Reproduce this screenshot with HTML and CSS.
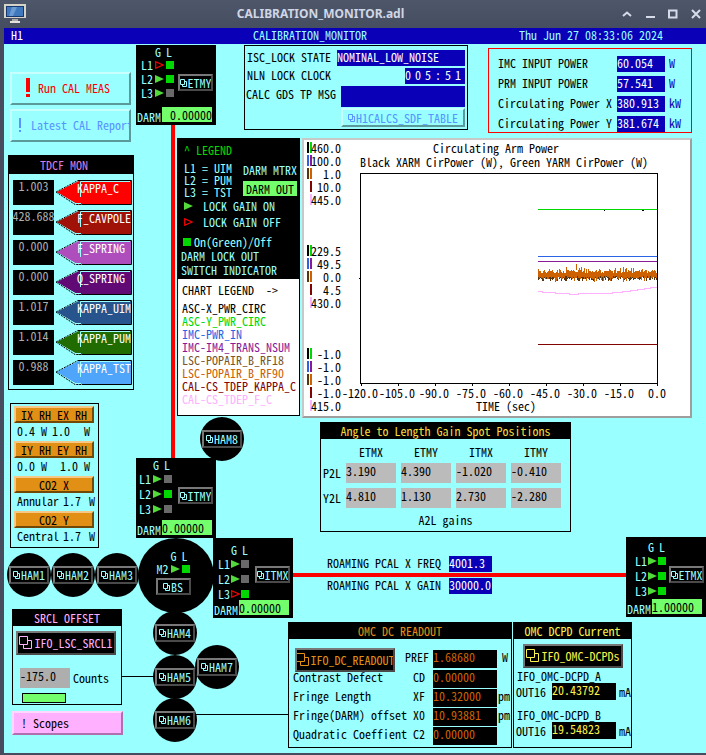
FILE: index.html
```html
<!DOCTYPE html>
<html lang="en">
<head>
<meta charset="utf-8">
<title>CALIBRATION_MONITOR.adl</title>
<link rel="stylesheet" href="styles.css">
</head>
<body>
<svg class="defs" aria-hidden="true">
  <symbol id="rd" viewBox="0 0 8 8"><path d="M.5 .5h4v5h-4z M4.500 2.500h2v5h-4v-2" fill="none" stroke="currentColor"/></symbol>
  <symbol id="rd-big" viewBox="0 0 14 14"><path d="M.5 .5h8v8h-8z M8.500 4.500h4v8h-8v-4" fill="none" stroke="currentColor"/></symbol>
  <symbol id="on" viewBox="0 0 9 8"><path d="M0 0L9 4L0 8z" fill="#52da3b"/></symbol>
  <symbol id="off" viewBox="0 0 9 8"><path d="M.7 .8L8 4L.7 7.200z" fill="none" stroke="#fd0000" stroke-width="1.200"/></symbol>
  <symbol id="tag" viewBox="0 0 76 26">
    <path d="M0 12L23 1H75V25H23z" fill="currentColor"/>
    <path d="M0 12L22 .5H75" fill="none" stroke="#99ffff"/>
    <path d="M0 12L22 .5" fill="none" stroke="#000" stroke-dasharray="2 1"/>
    <path d="M0 12L19 23.500H25" fill="none" stroke="#99ffff"/>
    <path d="M0 12L19 24.500H25" fill="none" stroke="#000" stroke-dasharray="2 1"/>
    <path d="M22 .5H75.500V24.500H26" fill="none" stroke="#000"/>
    <path d="M24.500 17V1.500H74" fill="none" stroke="#99ffff"/>
  </symbol>
</svg>

<header class="titlebar">
  <svg class="app-icon" width="22" height="20" viewBox="0 0 22 20">
    <rect x="0" y="0" width="22" height="14" fill="#d5d2c8"/><rect x="2" y="2" width="18" height="11" fill="#15386f"/>
    <rect x="3" y="3" width="16" height="9" fill="#3f78bd"/><path d="M8 3h5l-4 9H5z" fill="#6b9bd3"/>
    <rect x="8" y="15" width="6" height="2" fill="#aaa"/><rect x="6" y="17" width="10" height="2" fill="#e4e2dc"/>
  </svg>
  <h1>CALIBRATION_MONITOR.adl</h1>
  <div class="window-buttons">
    <button aria-label="Shade"><svg width="10" height="10" viewBox="0 0 10 10"><path d="M1 7L5 3.500L9 7"/></svg></button>
    <button aria-label="Minimize"><svg width="10" height="10" viewBox="0 0 10 10"><path d="M1 8H10"/></svg></button>
    <button aria-label="Maximize"><svg width="10" height="10" viewBox="0 0 10 10"><path d="M1 1.500H8.500V8.500H1z"/></svg></button>
    <button aria-label="Close"><svg width="10" height="10" viewBox="0 0 10 10"><path d="M1 1L9 9M9 1L1 9"/></svg></button>
  </div>
</header>

<main class="screen">
  <div class="banner"><span class="ifo">H1</span><span>CALIBRATION_MONITOR</span><time>Thu Jun 27 08:33:06 2024</time></div>

  <div class="panels">
    <div class="side">
      <button class="bevel command run"><svg width="4" height="20" viewBox="0 0 4 20"><path d="M0 0h4v14H0zM0 16h4v3H0z" fill="currentColor"/></svg><span>Run CAL MEAS</span></button>
      <button class="bevel command report"><svg width="2" height="14" viewBox="0 0 2 14"><path d="M0 0h2v10H0zM0 12h2v2H0z" fill="currentColor"/></svg><span>Latest CAL Report</span></button>

      <section class="panel tdcf">
        <h2 class="violet">TDCF MON</h2>
        <ul>
          <li><output>1.003</output><button class="tag c1"><svg><use href="#tag"/></svg><span>KAPPA_C</span></button></li>
          <li><output>428.688</output><button class="tag c2"><svg><use href="#tag"/></svg><span>F_CAVPOLE</span></button></li>
          <li><output>0.000</output><button class="tag c3"><svg><use href="#tag"/></svg><span>F_SPRING</span></button></li>
          <li><output>0.000</output><button class="tag c4"><svg><use href="#tag"/></svg><span>Q_SPRING</span></button></li>
          <li><output>1.017</output><button class="tag c5"><svg><use href="#tag"/></svg><span>KAPPA_UIM</span></button></li>
          <li><output>1.014</output><button class="tag c6"><svg><use href="#tag"/></svg><span>KAPPA_PUM</span></button></li>
          <li><output>0.988</output><button class="tag c7"><svg><use href="#tag"/></svg><span>KAPPA_TST</span></button></li>
        </ul>
      </section>

      <section class="panel heaters">
        <button class="bevel orange">IX RH EX RH</button>
        <p class="pair"><span>0.4</span><span>W</span><span>1.0</span><span>W</span></p>
        <button class="bevel orange">IY RH EY RH</button>
        <p class="pair late"><span>0.0</span><span>W</span><span>1.0</span><span>W</span></p>
        <button class="bevel orange">CO2 X</button>
        <p class="single"><span>Annular</span><span>1.7</span><span>W</span></p>
        <button class="bevel orange">CO2 Y</button>
        <p class="single"><span>Central</span><span>1.7</span><span>W</span></p>
      </section>

      <section class="panel srcl">
        <h2 class="pink-text">SRCL OFFSET</h2>
        <button class="bevel dark wide pink-text"><svg class="big"><use href="#rd-big"/></svg>IFO_LSC_SRCL1</button>
        <label class="counts"><input value="-175.0"><span>Counts</span></label>
        <div class="bar"></div>
      </section>
      <button class="bevel scopes">! Scopes</button>
    </div>

    <div class="main">
      <div class="row top">
        <section class="panel lock">
          <p><span>ISC_LOCK STATE</span><output class="blue state">NOMINAL_LOW_NOISE</output></p>
          <p><span>NLN LOCK CLOCK</span><output class="blue clock"><span>0</span><span>0</span><span>5</span><span>:</span><span>5</span><span>1</span></output></p>
          <p class="msg"><span>CALC GDS TP MSG</span><output class="blue message"></output></p>
          <button class="bevel sdf"><svg class="small"><use href="#rd"/></svg>H1CALCS_SDF_TABLE</button>
        </section>
        <section class="panel power">
          <p><span>IMC INPUT POWER</span><output class="blue">60.054</output><span class="unit">W</span></p>
          <p><span>PRM INPUT POWER</span><output class="blue">57.541</output><span class="unit">W</span></p>
          <p><span>Circulating Power X</span><output class="blue">380.913</output><span class="unit">kW</span></p>
          <p><span>Circulating Power Y</span><output class="blue">381.674</output><span class="unit">kW</span></p>
        </section>
      </div>

      <div class="row middle">
        <section class="panel legend">
          <div class="keys">
            <h2>^ LEGEND</h2>
            <div class="levels">
              <p>L1 = UIM<br>L2 = PUM<br>L3 = TST</p>
              <div><button class="mtrx">DARM MTRX</button><button class="out">DARM OUT</button></div>
            </div>
            <p class="key"><svg class="tri"><use href="#on"/></svg> LOCK GAIN ON</p>
            <p class="key"><svg class="tri"><use href="#off"/></svg> LOCK GAIN OFF</p>
            <p class="key led-key"><i class="led"></i>On(Green)/Off</p>
            <p class="note">DARM LOCK OUT<br>SWITCH INDICATOR</p>
          </div>
          <div class="traces">
            <h2>CHART LEGEND&nbsp; -&gt;</h2>
            <ul>
              <li>ASC-X_PWR_CIRC</li>
              <li class="t-green">ASC-Y_PWR_CIRC</li>
              <li class="t-blue">IMC-PWR_IN</li>
              <li class="t-purple">IMC-IM4_TRANS_NSUM</li>
              <li class="t-brown">LSC-POPAIR_B_RF18</li>
              <li class="t-orange">LSC-POPAIR_B_RF90</li>
              <li class="t-red">CAL-CS_TDEP_KAPPA_C</li>
              <li class="t-pink">CAL-CS_TDEP_F_C</li>
            </ul>
          </div>
        </section>
        <section class="chart">
          <svg id="strip" viewBox="304 140 386 276" role="img" aria-label="Circulating Arm Power">
            <text x="433" y="153">Circulating Arm Power</text>
            <text x="360" y="167">Black XARM CirPower (W), Green YARM CirPower (W)</text>
            <path d="M360.500 173.500H657.500V383.500H360.500z" fill="none" stroke="#000"/>
            <g id="scales"></g>
            <text x="506" y="411" text-anchor="middle">TIME (sec)</text>
            <g fill="none">
              <path d="M538 209.500H657" stroke="#00d800"/>
              <path d="M604 210.500h1M642 210.500h2" stroke="#000"/>
              <path d="M538 256.500H657" stroke="#2a63e4"/>
              <path d="M538 261.500H657" stroke="#8b1a96"/>
              <path d="M538 344.500H657" stroke="#820400"/>
              <path d="M538 291.500h4v1h13v1h14v1h9v-1h34v-1h10v-1h8v-1h7v-1h7v-1h6v-1h7" stroke="#ffb0ff"/>
              <path id="rf18" stroke="#58340f"/>
              <path id="rf90" stroke="#cd6100"/>
            </g>
          </svg>
        </section>
      </div>

      <section class="panel a2l">
        <h2 class="gold">Angle to Length Gain Spot Positions</h2>
        <table>
          <thead><tr><td></td><th>ETMX</th><th>ETMY</th><th>ITMX</th><th>ITMY</th></tr></thead>
          <tbody>
            <tr><th>P2L</th><td><input aria-label="P2L ETMX" value="3.190"></td><td><input aria-label="P2L ETMY" value="4.390"></td><td><input aria-label="P2L ITMX" value="-1.020"></td><td><input aria-label="P2L ITMY" value="-0.410"></td></tr>
            <tr><th>Y2L</th><td><input aria-label="Y2L ETMX" value="4.810"></td><td><input aria-label="Y2L ETMY" value="1.130"></td><td><input aria-label="Y2L ITMX" value="2.730"></td><td><input aria-label="Y2L ITMY" value="-2.280"></td></tr>
          </tbody>
        </table>
        <p>A2L gains</p>
      </section>

      <div class="pcal">
        <p><span>ROAMING PCAL X FREQ</span><output class="blue">4001.3</output></p>
        <p><span>ROAMING PCAL X GAIN</span><output class="blue">30000.0</output></p>
      </div>

      <div class="row bottom">
        <section class="panel omc">
          <h2 class="amber">OMC DC READOUT</h2>
          <div class="readouts">
            <p class="pref"><button class="bevel dark wide amber"><svg class="big"><use href="#rd-big"/></svg>IFO_DC_READOUT</button><span>PREF</span><output>1.68680</output><span class="unit">W</span></p>
            <p><span>Contrast Defect</span><span>CD</span><output>0.00000</output></p>
            <p><span>Fringe Length</span><span>XF</span><output>10.32000</output><span class="unit">pm</span></p>
            <p><span>Fringe(DARM) offset</span><span>X0</span><output>10.93881</output><span class="unit">pm</span></p>
            <p><span>Quadratic Coeffient</span><span>C2</span><output>0.00000</output></p>
          </div>
        </section>
        <section class="panel dcpd">
          <h2 class="yellow">OMC DCPD Current</h2>
          <button class="bevel dark wide yellow"><svg class="big"><use href="#rd-big"/></svg>IFO_OMC-DCPDs</button>
          <h3>IFO_OMC-DCPD_A</h3>
          <p><span>OUT16</span><output>20.43792</output><span>mA</span></p>
          <h3 class="second">IFO_OMC-DCPD_B</h3>
          <p><span>OUT16</span><output>19.54823</output><span>mA</span></p>
        </section>
      </div>
    </div>
  </div>

  <div class="diagram">
    <i class="beam y-arm"></i><i class="beam x-arm"></i>
    <i class="link ham5-link"></i><i class="link ham6-link"></i>

    <section class="station etmy">
      <div class="stage">
        <div class="locks"><p class="gl"><span>G</span><span>L</span></p>
          <p>L1<svg class="tri"><use href="#off"/></svg><i class="led"></i></p>
          <p>L2<svg class="tri"><use href="#on"/></svg><i class="led"></i></p>
          <p>L3<svg class="tri"><use href="#on"/></svg><i class="led idle"></i></p></div>
        <button class="bevel dark optic"><svg class="small"><use href="#rd"/></svg>ETMY</button>
      </div>
      <label class="darm">DARM<input class="right" value="0.00000"></label>
    </section>

    <section class="station itmy">
      <div class="stage">
        <div class="locks"><p class="gl"><span>G</span><span>L</span></p>
          <p>L1<svg class="tri"><use href="#on"/></svg><i class="led idle"></i></p>
          <p>L2<svg class="tri"><use href="#on"/></svg><i class="led"></i></p>
          <p>L3<svg class="tri"><use href="#on"/></svg><i class="led idle"></i></p></div>
        <button class="bevel dark optic"><svg class="small"><use href="#rd"/></svg>ITMY</button>
      </div>
      <label class="darm">DARM<input value="0.00000"></label>
    </section>

    <section class="splitter">
      <div class="locks"><p class="gl"><span>G</span><span>L</span></p><p>M2<svg class="tri"><use href="#on"/></svg><i class="led"></i></p></div>
      <button class="bevel dark optic"><svg class="small"><use href="#rd"/></svg>BS</button>
    </section>

    <section class="station itmx">
      <div class="stage">
        <div class="locks"><p class="gl"><span>G</span><span>L</span></p>
          <p>L1<svg class="tri"><use href="#on"/></svg><i class="led idle"></i></p>
          <p>L2<svg class="tri"><use href="#on"/></svg><i class="led idle"></i></p>
          <p>L3<svg class="tri"><use href="#off"/></svg><i class="led"></i></p></div>
        <button class="bevel dark optic"><svg class="small"><use href="#rd"/></svg>ITMX</button>
      </div>
      <label class="darm">DARM<input value="0.00000"></label>
    </section>

    <section class="station etmx">
      <div class="stage">
        <div class="locks"><p class="gl"><span>G</span><span>L</span></p>
          <p>L1<svg class="tri"><use href="#on"/></svg><i class="led"></i></p>
          <p>L2<svg class="tri"><use href="#on"/></svg><i class="led"></i></p>
          <p>L3<svg class="tri"><use href="#on"/></svg><i class="led"></i></p></div>
        <button class="bevel dark optic"><svg class="small"><use href="#rd"/></svg>ETMX</button>
      </div>
      <label class="darm">DARM<input value="1.00000"></label>
    </section>

    <div class="ham ham1"><button class="bevel dark"><svg class="small"><use href="#rd"/></svg>HAM1</button></div>
    <div class="ham ham2"><button class="bevel dark"><svg class="small"><use href="#rd"/></svg>HAM2</button></div>
    <div class="ham ham3"><button class="bevel dark"><svg class="small"><use href="#rd"/></svg>HAM3</button></div>
    <div class="ham ham4"><button class="bevel dark"><svg class="small"><use href="#rd"/></svg>HAM4</button></div>
    <div class="ham ham5"><button class="bevel dark"><svg class="small"><use href="#rd"/></svg>HAM5</button></div>
    <div class="ham ham6"><button class="bevel dark"><svg class="small"><use href="#rd"/></svg>HAM6</button></div>
    <div class="ham ham7"><button class="bevel dark"><svg class="small"><use href="#rd"/></svg>HAM7</button></div>
    <div class="ham ham8"><button class="bevel dark"><svg class="small"><use href="#rd"/></svg>HAM8</button></div>
  </div>
</main>
<script src="chart.js"></script>
</body>
</html>
```
FILE: styles.css
```css
* { box-sizing: border-box; margin: 0; padding: 0; }
html { background: #464c5e; }
body {
  font: 12px/14px "Noto Sans Mono CJK JP", "DejaVu Sans Mono", monospace;
  color: #000;
}
button, input { font: inherit; color: inherit; border: 0; border-radius: 0; background: none; }
ul { list-style: none; }
h2, h3 { font: inherit; }
p, span, output, button, h2, h3, li { white-space: nowrap; }
i { display: block; }
svg { flex: none; }
.defs { display: none; }

/* window frame */
.titlebar {
  display: flex; align-items: center; height: 28px; padding: 0 5px 0 4px;
  background: linear-gradient(#4e566a, #454e61);
}
.titlebar h1 {
  flex: 1; padding-left: 15px; text-align: center;
  font: bold 12px/28px "Noto Sans", sans-serif; color: #d0d6e4;
}
.app-icon { margin-right: -22px; }
.window-buttons { display: flex; gap: 13px; }
.window-buttons button { width: 10px; height: 10px; }
.window-buttons svg { display: block; fill: none; stroke: #d5dbe8; stroke-width: 2; }

.screen { position: relative; margin: 0 0 2px 4px; background: #99ffff; }
.banner {
  display: grid; grid-template-columns: 242px 1fr auto; align-items: center;
  height: 16px; padding: 0 43px 2px 7px; background: #0a00b8; color: #99ffff;
}
.ifo { color: #fff; }

/* shared parts */
.panel { border: 1px solid #000; }
.panel > h2 { background: #000; text-align: center; line-height: 16px; }
.bevel { display: flex; align-items: center; justify-content: center; overflow: hidden; border: 2px solid; }
.dark { background: #000; color: #99ffff; border-color: #787878 #4a4a4a #4a4a4a #787878; }
.big { width: 14px; height: 14px; margin-right: 1px; }
.small { width: 8px; height: 8px; }
.wide { width: 100px; height: 24px; }
.blue { display: block; height: 16px; background: #0a00b8; color: #fff; }
.violet { color: #d67fe2; }
.pink-text { color: #ffb0ff; }
.gold { color: #f9da3c; }
.amber { color: #e19015; }
.yellow { color: #fbf34a; }

.panels { display: flex; padding: 1px 14px 5px 4px; }
.side { display: flex; flex-direction: column; align-items: flex-start; width: 127px; margin-right: 42px; }
.main { flex: 1; min-width: 0; }
.row { display: flex; align-items: flex-start; }

/* commands */
.command {
  width: 121px; height: 33px; margin-left: 2px; padding-bottom: 2px; justify-content: flex-start;
  border-color: #c8ffff #5a9a9a #5a9a9a #c8ffff;
}
.run { margin-top: 27px; padding-left: 14px; gap: 8px; color: #fd0000; }
.report { margin-top: 4px; padding-left: 7px; gap: 10px; color: #5893ff; }

/* TDCF monitor */
.tdcf { width: 126px; margin-top: 13px; }
.tdcf h2 { line-height: 18px; padding-right: 14px; }
.tdcf ul { display: grid; gap: 5px; padding: 6px 2px 4px 4px; }
.tdcf li { display: flex; gap: 2px; }
.tdcf output {
  display: flex; justify-content: center; width: 41px; height: 25px;
  line-height: 12px; background: #000; color: #aeaeae;
}
.tag { position: relative; width: 76px; height: 25px; text-align: left; }
.tag svg { position: absolute; inset: 0; width: 76px; height: 26px; }
.tag span { position: relative; display: block; height: 25px; padding-left: 21px; line-height: 16px; color: #fff; }
.c1 { color: #fd0000; } .c2 { color: #a01207; } .c3 { color: #ae4ebc; } .c4 { color: #610a75; }
.c5 { color: #27548d; } .c6 { color: #216c00; } .c7 { color: #4ea5f9; }

/* ring heaters and CO2 */
.heaters { width: 89px; margin: 13px 0 0 2px; padding: 2px 3px 1px; }
.orange { width: 80px; height: 17px; background: #e19015; border-color: #f5c888 #704808 #704808 #f5c888; }
.heaters p { display: grid; height: 18px; padding: 1px 0 0 3px; }
.pair { grid-template-columns: 24px 11px 32px 6px; }
.late { grid-template-columns: 24px 19px 24px 6px; }
.single { grid-template-columns: 46px 26px 6px; }

/* SRCL */
.srcl { width: 110px; margin: 61px 0 0 4px; }
.srcl .wide { margin: 5px 0 0 3px; }
.counts { display: flex; align-items: center; gap: 3px; margin: 13px 0 0 7px; }
.counts input { width: 50px; height: 20px; padding-bottom: 6px; background: #aeaeae; }
.bar { width: 44px; height: 10px; margin: 5px 0 1px 9px; border: 1px solid #000; background: #73ff6b; }
.scopes {
  width: 111px; height: 24px; margin: 6px 0 0 4px; padding-left: 7px; justify-content: flex-start;
  background: #ffb0ff; border-color: #ffd8ff #b070b0 #b070b0 #ffd8ff;
}

/* lock state and power */
.top { margin-left: 67px; }
.lock { width: 224px; height: 85px; padding: 4px 2px 0 1px; }
.lock p { display: flex; justify-content: space-between; height: 18px; padding-left: 1px; }
.lock .msg { height: 22px; padding: 0; }
.msg > span { padding-top: 1px; }
.state { width: 128px; }
.clock { display: grid; grid-template-columns: repeat(6, 10px); }
.lock .message { width: 124px; height: 21px; }
.sdf {
  width: 124px; height: 19px; margin-left: auto; color: #5893ff;
  border-color: #c8ffff #5a9a9a #5a9a9a #c8ffff;
}
.power { width: 204px; height: 85px; margin: 3px 0 0 20px; padding: 7px 9px 0; border-color: #fd0000; }
.power p { display: grid; grid-template-columns: 119px 48px 12px; height: 20px; }
.power .unit { padding-left: 4px; color: #0a00b8; }

/* legend */
.middle { margin-top: 5px; }
.legend { flex: none; width: 123px; background: #fff; }
.keys { height: 140px; padding: 4px 2px 0 3px; background: #000; color: #99ffff; }
.keys h2 { padding-left: 3px; color: #00d800; }
.levels { display: flex; justify-content: space-between; margin-top: 5px; padding-left: 3px; line-height: 12px; }
.mtrx, .out { display: block; width: 54px; height: 15px; line-height: 15px; text-align: left; }
.out { margin-top: 4px; text-align: center; background: #73ff6b; color: #000; }
.key { display: flex; align-items: center; gap: 10px; height: 16px; padding-left: 3px; }
.led-key { gap: 3px; height: 14px; margin-top: 5px; padding-left: 2px; }
.note { line-height: 14px; }
.tri { width: 9px; height: 8px; }
.led { flex: none; width: 8px; height: 8px; background: #00d800; }
.idle { background: #696969; }
.traces { padding: 4px 0 10px 4px; }
.traces li { line-height: 13px; }
.traces ul { padding-top: 4px; }

.t-green { color: #00d800; } .t-blue { color: #2a63e4; } .t-purple { color: #8b1a96; } .t-brown { color: #7d5627; }
.t-orange { color: #cd6100; } .t-red { color: #820400; } .t-pink { color: #ffb0ff; }

/* strip chart */
.chart { flex: 1; margin-left: 2px; background: #fff; border: 2px solid; border-color: #c8c8c8 #9e9e9e #9e9e9e #c8c8c8; }
.chart svg { display: block; width: 100%; shape-rendering: crispEdges; }

/* A2L */
.a2l { width: 251px; margin: 4px 0 0 143px; }
.a2l table { border-spacing: 5px; margin: 2px 0 0 -3px; }
.a2l th { font-weight: normal; }
.a2l thead { line-height: 12px; }
.a2l tbody th { width: 16px; }
.a2l input { display: block; width: 50px; height: 20px; padding-bottom: 6px; background: #bbb; }
.a2l p { text-align: center; padding-bottom: 4px; }

/* PCAL */
.pcal { display: grid; gap: 6px; margin: 24px 0 28px 150px; }
.pcal p { display: flex; gap: 8px; }
.pcal output { width: 43px; }

/* OMC */
.bottom { gap: 1px; margin-left: 111px; }
.omc { width: 224px; height: 126px; }
.readouts { padding: 11px 0 0 4px; }
.readouts p { display: grid; grid-template-columns: 114px 26px 64px 12px; height: 19px; align-items: start; }
.readouts p > span:nth-child(2) { padding-left: 6px; }
.readouts .pref { grid-template-columns: 112px 28px 64px 12px; height: 20px; }
.readouts .pref > span:nth-child(2) { padding: 0; }
.readouts .pref .wide { margin: -2px 0 0 2px; }
.readouts p > .unit { padding-left: 1px; }
.readouts .pref > .unit { padding-left: 5px; }
.readouts output { display: block; height: 18px; background: #000; color: #cd6100; }
.dcpd { width: 119px; height: 126px; }
.dcpd .wide { margin: 5px 0 1px 9px; }
.dcpd h3 { padding-left: 3px; }
.dcpd .second { margin-top: 8px; }
.dcpd p { display: flex; gap: 3px; align-items: center; padding-left: 2px; }
.dcpd output { display: block; width: 64px; height: 17px; margin-left: 3px; background: #000; color: #fbf34a; }

/* interferometer diagram */
.station, .splitter, .ham, .beam, .link { position: absolute; }
.beam { background: #fd0000; }
.y-arm { left: 167px; top: 96px; width: 4px; height: 334px; }
.x-arm { left: 289px; right: 80px; top: 545px; height: 4px; }
.link { height: 1px; background: #000; }
.ham5-link { left: 117px; top: 648px; width: 34px; }
.ham6-link { left: 190px; top: 686px; width: 94px; }

.station { display: flex; flex-direction: column; justify-content: space-between; width: 80px; height: 80px; background: #000; color: #99ffff; }
.etmy { left: 132px; top: 17px; }
.itmy { left: 132px; top: 430px; }
.itmx { left: 209px; top: 510px; }
.etmx { right: 0; top: 509px; }
.stage { display: flex; align-items: flex-start; justify-content: space-between; padding: 0 3px 0 5px; }
.itmy .stage { padding-left: 3px; }
.itmx .stage { padding-top: 6px; }
.etmx .stage { padding: 4px 2px 0 9px; }
.locks p { display: flex; align-items: center; gap: 2px; height: 15px; }
.etmy .locks p { height: 14px; }
.etmx .locks p, .itmx .locks p { gap: 1px; }
.locks .gl, .etmy .locks .gl { justify-content: flex-end; gap: 5px; height: 13px; padding-right: 2px; }
.etmx .locks .gl, .itmx .locks .gl { gap: 5px; height: 12px; padding-right: 1px; }
.optic { height: 17px; width: 35px; margin-top: 29px; }
.itmx .optic { margin-top: 22px; }
.etmx .optic { margin-top: 25px; }
.darm { display: flex; align-items: flex-end; gap: 1px; padding: 0 4px 0 1px; height: 17px; line-height: 16px; }
.darm input { width: 50px; height: 15px; margin-bottom: 3px; background: #73ff6b; color: #000; }
.darm .right { text-align: right; }

.splitter {
  left: 134px; top: 510px; display: flex; flex-direction: column; align-items: center;
  width: 76px; height: 75px; padding: 11px 6px 0 0; border-radius: 50%; background: #000; color: #99ffff;
}
.splitter .locks p { height: 13px; }
.splitter .optic { margin-top: 3px; }

.ham { display: flex; align-items: center; justify-content: center; width: 44px; height: 44px; border-radius: 50%; background: #000; }
.ham .bevel { flex: none; width: 40px; height: 18px; }
.ham1 { left: 3px; top: 525px; }
.ham2 { left: 47px; top: 525px; }
.ham3 { left: 91px; top: 525px; }
.ham4 { left: 149px; top: 583px; }
.ham5 { left: 149px; top: 627px; }
.ham6 { left: 149px; top: 670px; }
.ham7 { left: 191px; top: 617px; }
.ham8 { left: 196px; top: 389px; }
```
FILE: chart.js
```js
const NS = "http://www.w3.org/2000/svg";
const scales = document.getElementById("scales");

function add(tag, attrs, text) {
  const el = document.createElementNS(NS, tag);
  for (const k in attrs) el.setAttribute(k, attrs[k]);
  if (text) el.textContent = text;
  scales.appendChild(el);
}

// Y scales: one column of labels for each of three positions on the axis
const groups = [
  [149, ["460.0", "100.0", "1.0", "10.0", "445.0"]],
  [252, ["229.5", "49.5", "0.0", "4.5", "430.0"]],
  [355, ["-1.0", "-1.0", "-1.0", "-1.0", "415.0"]]
];
const colours = [["#000", "#00d800"], ["#2a63e4", "#8b1a96"], ["#58340f", "#cd6100"], [null, "#820400"], [null, "#ffb0ff"]];
for (const [top, labels] of groups) {
  labels.forEach((label, i) => {
    const y = top + i * 13;
    colours[i].forEach((fill, n) => {
      if (fill) add("rect", { x: 307 + n * 3, y: y - 7, width: 2, height: 11, fill });
    });
    add("text", { x: 341, y: y + 4, "text-anchor": "end" }, label);
  });
}

// Time axis
for (let i = 0; i < 9; i++) {
  const x = 361 + i * 37;
  add("path", { d: `M${x}.5 384v2`, stroke: "#000" });
  add("text", { x: i === 8 ? x : x - 1, y: 398, "text-anchor": "middle" }, (i * 15 - 120).toFixed(1));
}
add("path", { d: "M359 278.500h2", stroke: "#000" });

// Noisy POPAIR traces from a repeatable sequence
let seed = 7;
const rand = () => (seed = (seed * 16807) % 2147483647) / 2147483647;
let rf90 = "";
let rf18 = "";
for (let x = 538; x < 657; x++) {
  const spike = rand() < 0.2 ? 3 : 0;
  const dip = rand() < 0.2 ? 3 : 0;
  const top = Math.round(273 - rand() * 3 - spike);
  const bottom = Math.round(276 + rand() * 3 + dip);
  rf90 += `M${x}.5 ${top}V${bottom}`;
  rf18 += `M${x}.5 276V${Math.round(277 + rand() * 4)}`;
}
rf90 += "M576.5 264V270";
document.getElementById("rf90").setAttribute("d", rf90);
document.getElementById("rf18").setAttribute("d", rf18);
```
